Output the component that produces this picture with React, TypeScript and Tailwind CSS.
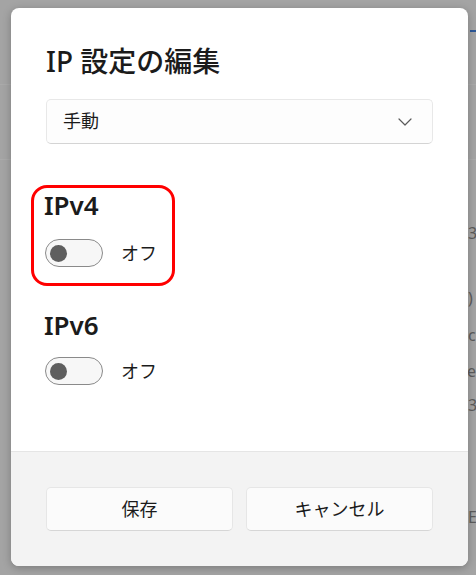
import { ChevronDown } from "lucide-react";

const font = { fontFamily: '"Noto Sans", "Noto Sans CJK JP", sans-serif' };

// Off-state toggle, Windows 11 style
const Toggle = ({ label }: { label: string }) => (
  <div className="flex items-center gap-[18px]">
    <div className="flex h-[28px] w-[58px] items-center rounded-full border border-[#8a8a8a] bg-[#f7f7f7] pl-[4px]">
      <div className="h-[17px] w-[17px] rounded-full bg-[#5f5f5f]" />
    </div>
    <span className="text-[18px] leading-[24px] text-[#1b1b1b]">{label}</span>
  </div>
);

const FooterButton = ({ children }: { children: React.ReactNode }) => (
  <button className="flex h-[44px] flex-1 items-center justify-center rounded-[5px] border border-[#e6e6e6] border-b-[#d6d6d6] bg-[#fbfbfb] text-[18px] text-[#1b1b1b]">
    {children}
  </button>
);

export default function App() {
  return (
    <div className="relative h-[575px] w-[476px] overflow-hidden bg-[#a4a4a4]" style={font}>
      {/* dimmed settings page behind the dialog */}
      <div className="flex flex-col text-[16px] leading-[24px] text-[#5c5c5c]">
        <div className="h-[30px]" />
        <div className="flex justify-end">
          <div className="h-[2px] w-[6px] bg-[#2b5797]" />
        </div>
        <div className="h-[53px] border-b border-[#aaaaaa]" />
        <div className="h-[75px] border-b border-[#aaaaaa]" />
        <div className="mt-[61px] pl-[468px]">3</div>
        <div className="mt-[41px] pl-[468px]">)</div>
        <div className="mt-[13px] pl-[468px]">c</div>
        <div className="mt-[12px] pl-[467px]">e</div>
        <div className="mt-[10px] pl-[468px]">3</div>
        <div className="mt-[88px] pl-[468px]">E</div>
      </div>

      {/* dialog */}
      <div className="absolute left-[11px] top-[8px] flex h-[558px] w-[457px] flex-col overflow-hidden rounded-[8px] bg-white shadow-[0_2px_8px_rgba(0,0,0,0.25)]">
        <div className="flex flex-1 flex-col px-[35px] pt-[35px]">
          <h1 className="text-[28px] font-medium leading-[36px] text-[#1b1b1b]">IP 設定の編集</h1>

          <div className="mt-[20px] flex h-[45px] items-center justify-between rounded-[5px] border border-[#e8e8e8] border-b-[#d4d4d4] bg-[#fdfdfd] pl-[16px] pr-[15px]">
            <span className="text-[18px] text-[#1b1b1b]">手動</span>
            <ChevronDown size={24} strokeWidth={1.2} className="text-[#5a5a5a]" />
          </div>

          <h2 className="mt-[45px] ml-[-2px] text-[26px] font-semibold leading-[32px] text-[#1b1b1b]">IPv4</h2>
          <div className="mt-[18px] ml-[-1px]">
            <Toggle label="オフ" />
          </div>

          <h2 className="mt-[42px] ml-[-2px] text-[26px] font-semibold leading-[32px] text-[#1b1b1b]">IPv6</h2>
          <div className="mt-[16px] ml-[-1px]">
            <Toggle label="オフ" />
          </div>
        </div>

        <div className="flex gap-[13px] border-t border-[#e5e5e5] bg-[#f3f3f3] px-[35px] pt-[35px] pb-[35px]">
          <FooterButton>保存</FooterButton>
          <FooterButton>キャンセル</FooterButton>
        </div>
      </div>

      {/* red annotation box */}
      <div className="absolute left-[31px] top-[185px] h-[101px] w-[144px] rounded-[16px] border-[3px] border-[#ff0000]" />
    </div>
  );
}
